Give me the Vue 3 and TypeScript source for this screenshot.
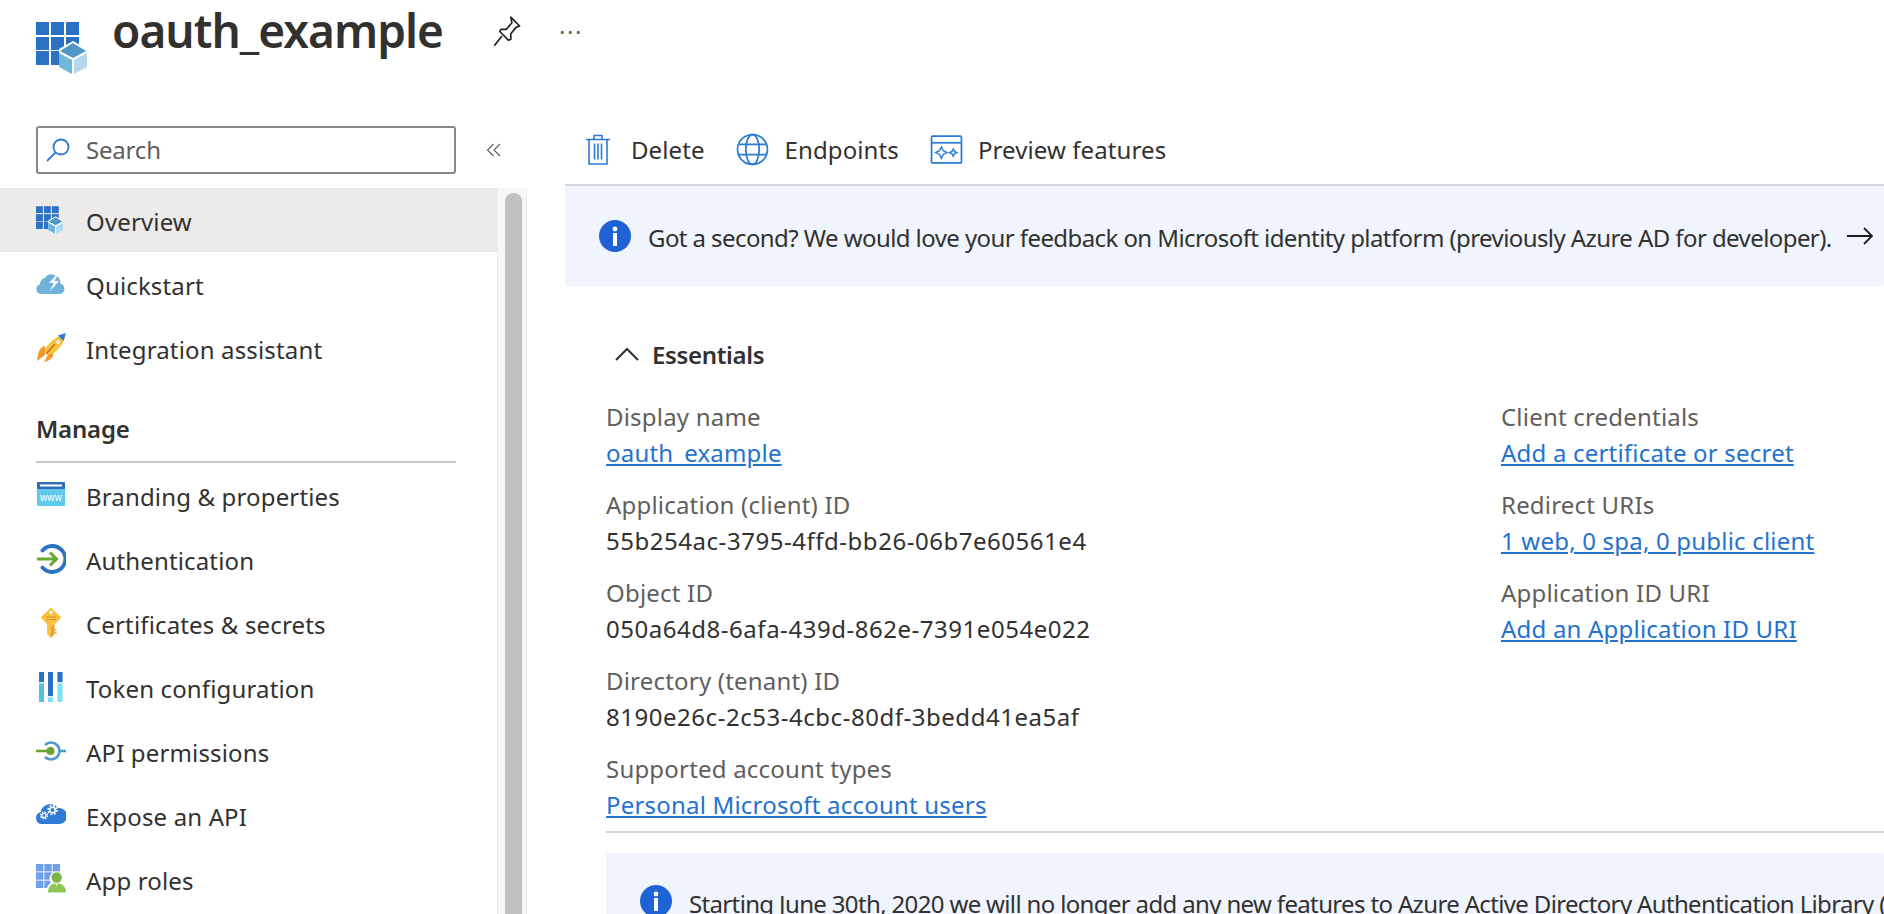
<template>
  <div class="page">
    <header class="title-bar">
      <svg class="logo" viewBox="0 0 51 52"><use href="#app-reg" /></svg>
      <h1>oauth_example</h1>
      <svg class="pin" viewBox="0 0 26 30" fill="none" stroke="#1f1f1f" stroke-width="1.5" stroke-linejoin="round">
        <path d="M16 2l8 8-3 1-5 6 0 5-2 1-8-8 1-2 5 0 5-6z" />
        <path d="M8 19l-7 9" />
      </svg>
      <span class="more">···</span>
    </header>

    <div class="body">
      <aside class="sidebar">
        <div class="search-row">
          <div class="search">
            <svg viewBox="0 0 24 24" fill="none" stroke="#2b7cd3" stroke-width="1.8"><circle cx="15" cy="9" r="7.5" /><path d="M9.500 14.500L1 23" /></svg>
            <span>Search</span>
          </div>
          <svg class="collapse" viewBox="0 0 16 16" fill="none" stroke="#605e5c" stroke-width="1.1"><path d="M7.500 2L1.500 8l6 6M14 2L8 8l6 6" /></svg>
        </div>
        <div class="nav-wrap">
          <nav class="nav">
            <a v-for="item in topItems" :key="item.label" class="nav-item" :class="{ active: item.active }">
              <svg class="nav-icon" viewBox="0 0 30 30" v-html="item.icon"></svg>
              <span>{{ item.label }}</span>
            </a>
            <div class="section">Manage</div>
            <a v-for="item in manageItems" :key="item.label" class="nav-item">
              <svg class="nav-icon" viewBox="0 0 30 30" v-html="item.icon"></svg>
              <span>{{ item.label }}</span>
            </a>
          </nav>
          <div class="scroll-track"><div class="scroll-thumb"></div></div>
        </div>
      </aside>

      <main class="content">
        <div class="toolbar">
          <button class="tool">
            <svg class="ic-trash" viewBox="0 0 26 32" fill="none" stroke="#2b7cd3" stroke-width="1.6"><path d="M1 6h24M9 6V2h8v4M4 6v24.500h18V6M9.500 10v16M13 10v16M16.500 10v16" /></svg>
            <span>Delete</span>
          </button>
          <button class="tool">
            <svg class="ic-globe" viewBox="0 0 32 32" fill="none" stroke="#2b7cd3" stroke-width="1.7"><circle cx="16" cy="16" r="14.500" /><ellipse cx="16" cy="16" rx="6.500" ry="14.500" /><path d="M2.500 11h27M2.500 21h27" /></svg>
            <span>Endpoints</span>
          </button>
          <button class="tool">
            <svg class="ic-preview" viewBox="0 0 32 32" fill="none" stroke="#2b7cd3" stroke-width="1.7"><rect x="1.500" y="3" width="29" height="26" rx="1" /><path d="M1.500 9.500h29" /><path stroke-width="1.400" d="M11 13.500l1.800 3.700 3.700 1.800-3.700 1.800L11 24.500l-1.800-3.700L5.500 19l3.700-1.800zM22.500 15.500l1.200 2.300 2.300 1.200-2.300 1.200-1.200 2.300-1.200-2.300-2.300-1.200 2.300-1.200z" /></svg>
            <span>Preview features</span>
          </button>
        </div>

        <div class="banner">
          <svg class="info" viewBox="0 0 32 32"><circle cx="16" cy="16" r="16" fill="#1f62d6" /><circle cx="16" cy="9" r="2.400" fill="#fff" /><rect x="14" y="13" width="4" height="13" fill="#fff" /></svg>
          <span class="banner-text">Got a second? We would love your feedback on Microsoft identity platform (previously Azure AD for developer).</span>
          <svg class="arrow" viewBox="0 0 28 20" fill="none" stroke="#1f1f1f" stroke-width="1.800"><path d="M1 10h25M18 2l8 8-8 8" /></svg>
        </div>

        <section class="essentials">
          <div class="ess-head">
            <svg viewBox="0 0 26 16" fill="none" stroke="#323130" stroke-width="2"><path d="M2 14L13 3l11 11" /></svg>
            <span>Essentials</span>
          </div>
          <div class="ess-grid">
            <div class="ess-col">
              <div v-for="f in leftFields" :key="f.label" class="field">
                <div class="label">{{ f.label }}</div>
                <a v-if="f.link" class="link">{{ f.value }}</a>
                <div v-else class="value">{{ f.value }}</div>
              </div>
            </div>
            <div class="ess-col">
              <div v-for="f in rightFields" :key="f.label" class="field">
                <div class="label">{{ f.label }}</div>
                <a class="link">{{ f.value }}</a>
              </div>
            </div>
          </div>
          <div class="ess-rule"></div>
          <div class="notice">
            <svg class="info" viewBox="0 0 32 32"><circle cx="16" cy="16" r="16" fill="#1f62d6" /><circle cx="16" cy="9" r="2.400" fill="#fff" /><rect x="14" y="13" width="4" height="13" fill="#fff" /></svg>
            <span>Starting June 30th, 2020 we will no longer add any new features to Azure Active Directory Authentication Library (</span>
          </div>
        </section>
      </main>
    </div>

    <svg width="0" height="0" class="defs">
      <symbol id="app-reg" viewBox="0 0 51 52">
        <g fill="#2b72c4">
          <rect x="0" y="0" width="13" height="13" /><rect x="15" y="0" width="13" height="13" /><rect x="30" y="0" width="13" height="13" />
          <rect x="0" y="15" width="13" height="13" /><rect x="15" y="15" width="13" height="13" /><rect x="30" y="15" width="13" height="13" />
          <rect x="0" y="29" width="13" height="14" /><rect x="15" y="29" width="13" height="14" />
        </g>
        <path fill="#fff" d="M37 19l14 8v17l-14 8-14-8V27z" />
        <path fill="#5198c8" d="M37 21l13 8-13 7-13-7z" />
        <path fill="#70b6da" d="M23 31l13 7v14l-13-7z" />
        <path fill="#b3d8ec" d="M51 31l-13 7v14l13-7z" />
      </symbol>
    </svg>
  </div>
</template>

<script setup lang="ts">
interface NavItem {
  label: string;
  icon: string;
  active?: boolean;
}

interface Field {
  label: string;
  value: string;
  link?: boolean;
}

const topItems: NavItem[] = [
  { label: "Overview", active: true, icon: '<use href="#app-reg" x="0" y="1" width="27" height="28" />' },
  {
    label: "Quickstart",
    icon: '<path fill="#6fb3d9" d="M5 25a5 5 0 0 1-1-9.800A6 6 0 0 1 9 9a7 7 0 0 1 11-2 6 6 0 0 1 4 7.500A5.500 5.500 0 0 1 25 25z"/><path fill="#fff" d="M23 3L13 14h5l-5 9 10-11h-4.500l4.500-9z"/>',
  },
  {
    label: "Integration assistant",
    icon: '<path fill="#f5c33b" d="M27 2C19 4 12 10 8 18l5 5c8-4 14-11 16-19z"/><path fill="#2b7cd3" d="M30 0l-8 2.500 5.500 5.500z"/><path fill="#ef9a2c" d="M9 13c-5 1-7 6-8 15l8-6zM17 20c1 3-1 7-9 9l4-7z"/><circle cx="22" cy="9" r="2" fill="#eee"/><path stroke="#c8681e" stroke-width="1.300" d="M10 21l9-10"/>',
  },
];

const manageItems: NavItem[] = [
  {
    label: "Branding & properties",
    icon: '<rect x="1" y="2" width="28" height="24" rx="1" fill="#5fcaec"/><rect x="1" y="2" width="28" height="7" fill="#2f6fb8"/><rect x="4" y="4.500" width="22" height="2" fill="#fff"/><text x="15" y="21" text-anchor="middle" font-size="10" font-family="Liberation Sans, sans-serif" fill="#fff">www</text>',
  },
  {
    label: "Authentication",
    icon: '<path fill="none" stroke="#2b72c4" stroke-width="3.800" stroke-linecap="round" d="M6.500 6.500a13 13 0 1 1 0 17"/><path fill="none" stroke="#6aa52f" stroke-width="3" d="M1 15h19M14 8.500l6.500 6.500-6.500 6.500"/>',
  },
  {
    label: "Certificates & secrets",
    icon: '<path fill="#e8a02e" d="M11.500 14h7v12l-3.500 4-3.500-4z"/><path fill="#f8c23f" stroke="#f8c23f" stroke-width="2" stroke-linejoin="round" d="M15 1l9 8.500-9 9-9-9z"/><path fill="#f8c23f" d="M11.500 16h3.500v12l-1 1-2.500-3z"/><path stroke="#e8a02e" stroke-width="1.500" d="M18.500 22h2M18.500 25h2"/><circle cx="15" cy="4.500" r="1.800" fill="#fff"/><path stroke="#e0932a" stroke-width="1" d="M10 9h10M10 11.500h10"/>',
  },
  {
    label: "Token configuration",
    icon: '<rect x="3" y="0" width="5" height="30" fill="#52bfe0"/><rect x="12" y="0" width="5" height="30" fill="#7fe0f7"/><rect x="21.500" y="0" width="5" height="30" fill="#7fe0f7"/><rect x="3" y="0" width="5" height="10" fill="#2b72c4"/><rect x="12" y="0" width="5" height="24" fill="#2b72c4"/><rect x="21.500" y="0" width="5" height="10" fill="#2b72c4"/><rect x="2.500" y="10" width="6" height="1.500" fill="#e6eef5"/><rect x="11.500" y="24" width="6" height="1.500" fill="#e6eef5"/><rect x="21" y="10" width="6" height="1.500" fill="#e6eef5"/>',
  },
  {
    label: "API permissions",
    icon: '<path fill="none" stroke="#4d9ac9" stroke-width="2.600" d="M9 9a8.500 8.500 0 1 1 0 12M23.500 15H30"/><path stroke="#6aa52f" stroke-width="2.600" d="M0 15h14"/><circle cx="14.500" cy="15" r="4" fill="#6aa52f"/>',
  },
  {
    label: "Expose an API",
    icon: '<path fill="#2f7bd6" d="M6 24a6 6 0 0 1-1.500-11.800A10 10 0 0 1 22 8a8 8 0 0 1 2 16z"/><circle cx="16.500" cy="10" r="2.800" fill="none" stroke="#fff" stroke-width="1.500"/><circle cx="16.500" cy="10" r="4.400" fill="none" stroke="#fff" stroke-width="1.800" stroke-dasharray="1.800 1.650"/><circle cx="8" cy="15.500" r="2" fill="none" stroke="#fff" stroke-width="1.200"/><circle cx="8" cy="15.500" r="3.300" fill="none" stroke="#fff" stroke-width="1.500" stroke-dasharray="1.500 1.090"/>',
  },
  {
    label: "App roles",
    icon: '<g fill="#6f9fe8"><rect x="0" y="0" width="7.400" height="7.400"/><rect x="8.300" y="0" width="7.400" height="7.400"/><rect x="16.600" y="0" width="7.400" height="7.400"/><rect x="0" y="8.300" width="7.400" height="7.400"/><rect x="8.300" y="8.300" width="7.400" height="7.400"/><rect x="16.600" y="8.300" width="7.400" height="7.400"/><rect x="0" y="16.600" width="7.400" height="7.400"/><rect x="8.300" y="16.600" width="7.400" height="7.400"/></g><path fill="#fff" d="M10 29c0-6 3-9 5-10a7 7 0 1 1 11 0c2 1 4 4 4 10z"/><circle cx="20.700" cy="13.500" r="5.200" fill="#7ab648"/><path fill="#8cc653" d="M12 28.500c0-6 3.500-9.500 8.700-9.500s9.300 3.500 9.300 9.500z"/><path fill="#fff" d="M19 19.200h3.400l-1.700 2.800z"/>',
  },
];

const leftFields: Field[] = [
  { label: "Display name", value: "oauth_example", link: true },
  { label: "Application (client) ID", value: "55b254ac-3795-4ffd-bb26-06b7e60561e4" },
  { label: "Object ID", value: "050a64d8-6afa-439d-862e-7391e054e022" },
  { label: "Directory (tenant) ID", value: "8190e26c-2c53-4cbc-80df-3bedd41ea5af" },
  { label: "Supported account types", value: "Personal Microsoft account users", link: true },
];

const rightFields: Field[] = [
  { label: "Client credentials", value: "Add a certificate or secret" },
  { label: "Redirect URIs", value: "1 web, 0 spa, 0 public client" },
  { label: "Application ID URI", value: "Add an Application ID URI" },
];
</script>

<style>
html,
body {
  margin: 0;
  background: #fff;
  overflow: hidden;
}
</style>

<style scoped>
.page {
  width: 1884px;
  height: 914px;
  overflow: hidden;
  font-family: "Noto Sans", "Open Sans", sans-serif;
  font-size: 24px;
  letter-spacing: -0.2px;
  color: #323130;
  background: #fff;
}

.defs {
  position: absolute;
}

.title-bar {
  display: flex;
  align-items: center;
  height: 126px;
  padding: 0 0 66px 36px;
  box-sizing: border-box;
}

.logo {
  width: 51px;
  height: 52px;
  margin-top: 36px;
}

.title-bar h1 {
  margin: 0 0 0 25px;
  font-size: 46px;
  font-weight: 600;
  letter-spacing: -0.97px;
}

.pin {
  width: 29px;
  height: 33px;
  margin: 2px 0 0 50px;
}

.more {
  margin-left: 37px;
  padding-top: 2px;
  font-size: 24px;
  letter-spacing: 1.5px;
  color: #605e5c;
}

.body {
  display: flex;
}

.sidebar {
  width: 527px;
  flex: none;
}

.search-row {
  display: flex;
  align-items: center;
  height: 62px;
  padding: 0 0 15px 36px;
  box-sizing: border-box;
}

.search {
  display: flex;
  align-items: center;
  width: 420px;
  height: 48px;
  border: 2px solid #8a8886;
  border-radius: 3px;
  box-sizing: border-box;
  padding-left: 8px;
  color: #605e5c;
}

.search svg {
  width: 24px;
  height: 24px;
  margin-right: 16px;
}

.collapse {
  width: 16px;
  height: 16px;
  margin-left: 30px;
}

.nav-wrap {
  display: flex;
  border-right: 1px solid #eeeeee;
}

.nav {
  width: 497px;
  flex: none;
}

.nav-item {
  display: flex;
  align-items: center;
  height: 64px;
  padding-left: 36px;
  letter-spacing: 0.15px;
}

.nav-item span {
  padding-top: 2px;
}

.nav-item.active {
  background: #edebe9;
}

.nav-icon {
  width: 30px;
  height: 30px;
  margin-right: 20px;
}

.section {
  height: 68px;
  margin: 15px 41px 0 36px;
  padding-top: 17px;
  box-sizing: border-box;
  border-bottom: 2px solid #c8c6c4;
  font-weight: 600;
}

.scroll-track {
  flex: none;
  width: 29px;
  height: 726px;
  background: #f7f7f7;
  border-left: 1px solid #eaeaea;
  box-sizing: border-box;
  padding: 5px 0 0 7px;
}

.scroll-thumb {
  width: 17px;
  height: 800px;
  background: #c1c1c1;
  border-radius: 8px 8px 0 0;
}

.content {
  flex: 1;
  min-width: 0;
  padding-left: 38px;
}

.toolbar {
  display: flex;
  align-items: center;
  height: 60px;
  padding: 0 0 12px 20px;
  box-sizing: border-box;
  border-bottom: 2px solid #d2d5da;
}

.tool {
  display: flex;
  align-items: center;
  margin-right: 31px;
  padding: 0;
  border: 0;
  background: none;
  font: inherit;
  letter-spacing: 0.1px;
  color: #323130;
}

.tool svg {
  height: 33px;
}

.ic-trash {
  width: 26px;
  margin-right: 20px;
}

.ic-globe {
  width: 33px;
  margin-right: 16px;
}

.ic-preview {
  width: 33px;
  margin-right: 15px;
}

.banner {
  display: flex;
  align-items: center;
  height: 100px;
  padding-left: 34px;
  background: #eff4fd;
  border-radius: 0 0 3px 3px;
  letter-spacing: -0.58px;
}

.info {
  width: 32px;
  height: 32px;
  flex: none;
  margin-right: 17px;
}

.banner-text {
  white-space: nowrap;
  padding-top: 2px;
}

.arrow {
  width: 28px;
  height: 20px;
  margin-left: 14px;
}

.essentials {
  padding: 49px 0 0 41px;
}

.ess-head {
  display: flex;
  align-items: center;
  height: 38px;
  padding-left: 8px;
  font-weight: 600;
  letter-spacing: -0.35px;
}

.ess-head svg {
  width: 26px;
  height: 16px;
  margin-right: 12px;
}

.ess-grid {
  display: grid;
  grid-template-columns: 895px 1fr;
  margin-top: 26px;
  height: 432px;
}

.field {
  height: 88px;
  line-height: 36px;
}

.label {
  color: #605e5c;
  letter-spacing: 0.2px;
}

.value {
  color: #323130;
  letter-spacing: 0.53px;
}

.link {
  color: #2372d0;
  text-decoration: underline;
  letter-spacing: 0.2px;
}

.ess-rule {
  border-top: 2px solid #d2d2d2;
}

.notice {
  display: flex;
  align-items: flex-start;
  height: 120px;
  margin-top: 20px;
  padding: 32px 0 0 34px;
  background: #eff4fd;
  border-radius: 3px;
  white-space: nowrap;
  letter-spacing: -0.65px;
}

.notice span {
  padding-top: 2px;
}
</style>
